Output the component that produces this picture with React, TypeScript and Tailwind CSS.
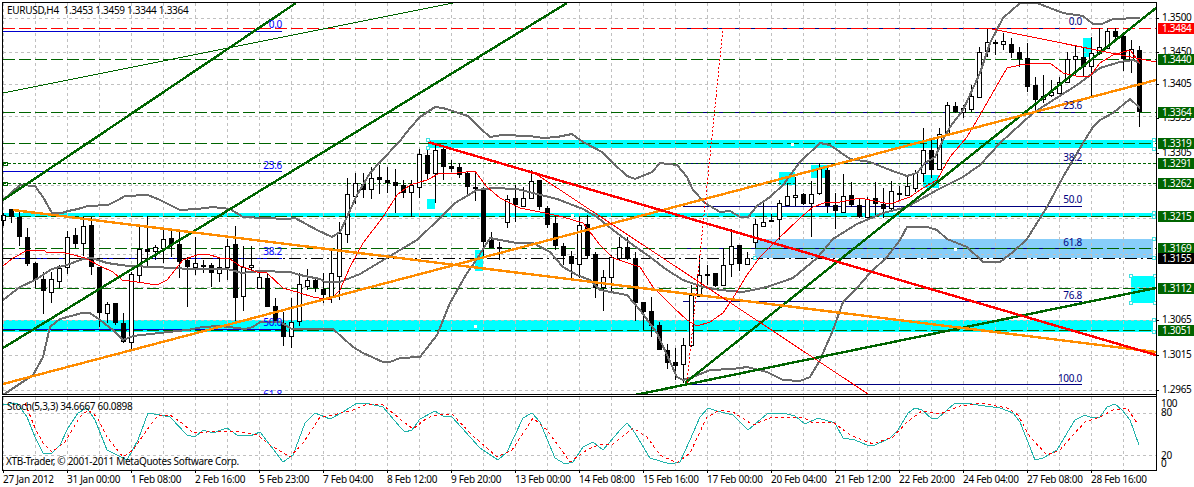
import React from "react";

/* ---- Colours ---- */

const GREEN = "#006400";
const GRAY = "#6b6b6b";
const ORANGE = "#ff8c00";
const RED = "#ff0000";
const GRID = "#c0c0c0";
const CYAN = "#00ffff";
const THICK = 2.4;

/* ---- Chart data, all in pixels of the plot ---- */

// high, body top, body bottom, low, 1 = white candle
type Candle = [number, number, number, number, number];

const CANDLES: Candle[] = [
  [213, 215, 220, 226, 1], [209, 209, 217, 223, 0], [212, 217, 237, 246, 0], [228, 237, 264, 266, 0],
  [262, 263, 280, 288, 0], [272, 279, 291, 314, 0], [272, 279, 292, 303, 1], [265, 268, 281, 288, 1],
  [231, 237, 267, 274, 1], [228, 235, 244, 248, 0], [217, 226, 243, 256, 1], [217, 225, 267, 275, 0],
  [267, 267, 313, 327, 0], [302, 304, 313, 323, 1], [303, 303, 323, 325, 0], [313, 323, 342, 343, 0],
  [272, 274, 342, 349, 1], [225, 249, 275, 283, 1], [216, 249, 252, 266, 0], [245, 247, 251, 260, 1],
  [230, 239, 248, 263, 1], [230, 238, 245, 257, 0], [232, 244, 262, 278, 0], [257, 260, 267, 307, 0],
  [237, 263, 267, 275, 1], [260, 265, 265, 273, 1], [263, 265, 273, 287, 0], [257, 267, 273, 282, 1],
  [239, 246, 267, 280, 1], [226, 244, 298, 321, 0], [246, 267, 296, 311, 1], [246, 265, 267, 273, 1],
  [270, 277, 288, 288, 1], [273, 278, 307, 307, 0], [298, 306, 323, 323, 0], [312, 323, 337, 346, 0],
  [298, 322, 336, 348, 1], [273, 284, 321, 326, 1], [269, 280, 286, 290, 1], [279, 280, 288, 292, 0],
  [273, 289, 295, 303, 0], [248, 273, 296, 303, 1], [222, 233, 276, 300, 1], [178, 194, 234, 243, 1],
  [173, 183, 196, 204, 1], [173, 184, 190, 198, 0], [167, 178, 189, 199, 1], [165, 177, 180, 194, 0],
  [167, 180, 183, 193, 0], [169, 182, 186, 213, 0], [180, 185, 193, 198, 0], [180, 185, 192, 217, 1],
  [149, 154, 187, 198, 1], [150, 155, 174, 180, 0], [143, 150, 173, 203, 1], [147, 149, 167, 180, 0],
  [160, 166, 169, 172, 0], [163, 167, 175, 178, 0], [171, 173, 187, 195, 0], [172, 187, 187, 201, 1],
  [187, 188, 242, 257, 0], [232, 240, 248, 248, 0], [242, 247, 247, 260, 1], [195, 199, 222, 228, 1],
  [185, 198, 205, 222, 0], [187, 198, 206, 206, 1], [170, 181, 198, 198, 1], [180, 180, 207, 210, 0],
  [206, 208, 225, 228, 0], [216, 223, 246, 250, 0], [243, 246, 256, 265, 0], [251, 256, 264, 278, 0],
  [217, 225, 264, 278, 1], [215, 224, 256, 259, 0], [252, 254, 288, 298, 0], [270, 277, 287, 311, 1],
  [255, 257, 277, 291, 1], [237, 247, 258, 260, 1], [237, 247, 258, 260, 0], [252, 258, 303, 321, 0],
  [302, 302, 312, 330, 0], [297, 311, 326, 337, 0], [322, 325, 350, 350, 0], [344, 350, 363, 369, 0],
  [348, 362, 366, 380, 0], [338, 345, 364, 383, 1], [285, 295, 345, 347, 1], [256, 275, 296, 296, 1],
  [265, 274, 274, 285, 1], [273, 273, 286, 287, 0], [248, 265, 285, 285, 1], [229, 246, 264, 277, 1],
  [245, 245, 264, 271, 0], [252, 258, 264, 265, 1], [219, 224, 242, 248, 1], [202, 222, 226, 227, 1],
  [214, 220, 220, 222, 1], [200, 203, 219, 240, 1], [183, 196, 205, 205, 1], [177, 195, 197, 206, 1],
  [193, 194, 204, 205, 0], [181, 194, 203, 237, 1], [163, 169, 193, 195, 1], [165, 170, 206, 213, 0],
  [193, 205, 211, 229, 0], [174, 196, 212, 213, 1], [182, 195, 205, 207, 0], [199, 205, 217, 218, 0],
  [197, 199, 217, 218, 1], [182, 198, 204, 217, 0], [188, 204, 209, 218, 0], [181, 191, 208, 210, 1],
  [186, 193, 193, 200, 1], [177, 186, 195, 195, 1], [170, 173, 188, 192, 1], [128, 150, 173, 182, 1],
  [140, 150, 170, 178, 0], [128, 134, 169, 170, 1], [102, 105, 134, 134, 1], [102, 106, 112, 113, 0],
  [105, 108, 112, 118, 1], [85, 96, 109, 112, 1], [47, 52, 97, 98, 1], [28, 42, 51, 57, 1],
  [40, 42, 42, 55, 1], [33, 41, 44, 50, 1], [38, 44, 53, 58, 0], [47, 52, 59, 67, 0],
  [43, 58, 87, 92, 0], [77, 85, 100, 112, 0], [75, 96, 99, 103, 1], [80, 92, 95, 97, 1],
  [77, 82, 93, 94, 1], [52, 59, 82, 83, 1], [45, 56, 59, 75, 1], [48, 57, 67, 76, 0],
  [37, 53, 66, 96, 1], [28, 47, 53, 55, 1], [28, 31, 48, 48, 1], [28, 31, 37, 41, 0],
  [32, 36, 59, 71, 0], [40, 49, 59, 73, 1], [46, 50, 112, 127, 0],
];

const UPPER =
  "3,200 20,185 35,186 43,197 52,213 62,213 68,211 78,209 88,206 108,205 118,200 125,196 148,195 160,200 180,210 197,209 213,207 230,209 243,217 287,219 295,218 317,230 332,237 340,232 347,217 357,195 370,173 380,162 400,141 410,128 420,117 435,107 443,108 468,116 480,128 490,137 502,135 530,136 543,138 557,137 572,134 583,142 602,152 613,163 627,176 635,179 652,172 660,163 677,165 687,177 693,190 705,203 720,212 730,211 740,217 748,217 757,206 770,197 783,185 800,162 820,143 830,145 850,159 870,162 890,170 907,176 917,173 925,163 935,157 943,140 950,127 963,110 980,73 990,43 1003,18 1020,3 1037,3 1063,13 1083,16 1093,24 1102,24 1113,19 1140,18";

const MIDDLE =
  "3,300 20,287 35,280 52,269 67,265 83,259 92,258 107,263 128,266 157,267 170,268 193,269 227,269 242,273 260,271 290,272 300,275 320,279 325,282 340,282 360,274 400,250 417,240 440,218 455,203 477,190 493,188 517,189 533,193 557,199 583,209 597,217 613,230 633,245 650,257 667,270 683,280 703,287 720,290 743,292 767,287 793,278 817,258 833,239 857,224 883,213 907,207 937,190 963,177 980,165 1000,143 1033,113 1077,85 1100,68 1120,62 1133,60 1140,63";

const LOWER =
  "3,395 33,375 43,357 50,327 60,319 82,313 90,313 100,320 113,330 123,340 133,336 160,333 187,330 203,327 220,326 245,329 253,327 260,322 280,322 292,329 333,329 353,347 363,353 383,362 390,362 400,358 420,357 437,335 450,303 467,273 475,262 490,238 500,240 517,243 533,243 550,252 563,267 577,275 590,280 600,290 627,295 640,310 657,333 677,377 683,380 693,377 710,370 733,369 747,367 767,372 783,380 800,381 810,377 820,360 833,330 843,302 857,288 870,273 887,257 900,240 907,227 927,227 937,230 947,239 967,247 983,262 1000,262 1013,252 1027,239 1047,207 1063,177 1083,143 1093,127 1100,120 1113,113 1130,99 1140,108";

const MA =
  "3,266 13,258 28,250 43,250 48,253 60,252 70,254 85,258 100,266 113,272 122,280 137,282 157,285 167,280 183,260 197,255 207,254 220,258 230,259 240,266 257,272 267,273 283,288 300,293 313,297 330,300 340,290 350,267 363,243 383,217 397,195 410,185 427,180 440,173 457,173 475,171 487,187 500,198 520,208 540,212 563,217 583,223 600,245 613,258 640,267 653,287 673,307 687,320 697,326 710,322 723,313 733,298 747,275 760,257 777,240 800,218 813,207 827,202 840,202 860,198 880,202 890,204 910,197 923,188 937,180 950,157 967,137 980,115 1000,80 1007,68 1020,65 1040,63 1050,63 1063,73 1080,77 1090,76 1100,63 1113,55 1130,50 1140,63";

const STOCH_MAIN =
  "3,405 17,403 27,417 35,437 43,453 52,453 60,445 68,428 78,413 87,408 95,420 107,450 127,460 138,440 148,413 160,415 170,417 187,435 195,437 203,430 213,433 227,428 237,435 250,436 260,432 283,462 293,455 305,423 315,413 330,419 343,412 357,403 370,404 383,407 400,427 405,432 412,430 420,419 435,411 443,416 452,417 480,448 498,460 507,452 523,418 532,413 540,422 555,458 565,464 573,462 583,447 593,442 603,450 620,430 627,423 633,430 650,458 670,464 680,462 690,440 700,417 708,408 717,411 733,415 748,430 767,414 783,413 795,416 805,424 818,418 835,423 843,438 855,440 867,445 875,445 890,438 898,430 908,413 915,408 922,410 932,419 938,418 955,403 965,403 978,405 1000,408 1013,413 1020,422 1035,460 1043,458 1057,450 1067,433 1075,420 1085,415 1092,418 1100,417 1107,407 1115,404 1122,410 1130,420 1139,445";

const STOCH_SIGNAL =
  "25,403 35,428 43,443 52,452 65,442 80,417 88,410 97,417 107,437 123,457 133,450 147,430 158,415 170,415 182,423 193,433 207,432 223,431 237,431 257,435 273,447 290,457 303,443 320,417 333,415 353,410 367,404 383,405 400,419 413,429 427,418 440,414 452,414 472,435 497,457 512,450 533,418 547,430 570,462 587,450 600,444 613,444 633,428 647,437 660,455 677,463 690,453 707,417 720,410 733,412 753,425 770,418 803,417 813,423 833,422 850,435 873,444 893,437 907,422 922,411 940,414 960,406 980,403 1007,408 1018,415 1030,437 1047,455 1060,450 1073,435 1085,422 1100,417 1113,410 1127,408 1137,423";

// x1, y1, x2, y2, colour, width
const TREND_LINES: Array<[number, number, number, number, string, number, string?]> = [
  [3, 93, 453, 3, GREEN, 1],
  [3, 200, 296, 3, GREEN, THICK],
  [3, 348, 567, 3, GREEN, THICK],
  [685, 383, 1156, 8, GREEN, THICK],
  [635, 395, 1156, 288, GREEN, THICK],
  [3, 384, 1156, 80, ORANGE, THICK],
  [13, 210, 1156, 352, ORANGE, THICK],
  [428, 142, 1156, 355, RED, THICK],
  [987, 28, 1156, 62, RED, 1],
  [533, 172, 868, 394, RED, 1],
  [687, 383, 723, 28, RED, 1, "2 2"],
];

// y, colour, dash
const LEVELS: Array<[number, string, string]> = [
  [28, RED, "12 4"],
  [59, GREEN, "12 4"],
  [112, GREEN, "12 4"],
  [143, GREEN, "12 4"],
  [163, GREEN, "3 2"],
  [183, GREEN, "3 2"],
  [216, GREEN, "12 4"],
  [248, GREEN, "12 4"],
  [258, "#000000", "12 4 2 4"],
  [288, GREEN, "12 4"],
  [330, GREEN, "12 4"],
];

const PRICE_TAGS: Array<[number, string, string]> = [
  [28, "1.3484", RED],
  [59, "1.3440", GREEN],
  [112, "1.3364", GREEN],
  [143, "1.3319", GREEN],
  [163, "1.3291", GREEN],
  [183, "1.3262", GREEN],
  [216, "1.3215", GREEN],
  [248, "1.3169", GREEN],
  [258, "1.3155", "#000000"],
  [288, "1.3112", GREEN],
  [330, "1.3051", GREEN],
];

const PRICE_TICKS: Array<[number, string]> = [
  [18, "1.3500"], [52, "1.3450"], [84, "1.3405"], [118, "1.3355"], [153, "1.3305"],
  [320, "1.3065"], [355, "1.3015"], [390, "1.2965"],
];

const GRID_Y = [18, 52, 84, 116, 153, 185, 218, 254, 287, 320, 355, 390];

// x, y, width, height
const ZONES: Array<[number, number, number, number]> = [
  [428, 140, 725, 8],
  [3, 213, 1150, 4],
  [3, 320, 1150, 12],
  [427, 199, 8, 10],
  [475, 250, 8, 21],
  [779, 172, 16, 13],
  [811, 165, 16, 13],
  [923, 175, 16, 13],
  [1083, 38, 8, 19],
  [1131, 276, 24, 27],
];

const HANDLES: Array<[number, number]> = [
  [428, 140], [428, 148], [1131, 276], [1155, 276], [1131, 303], [1155, 303], [755, 258],
  [1154, 140], [1154, 149], [1154, 213], [1154, 217], [1154, 239], [1154, 258], [1154, 320], [1154, 332],
];

const SQUARES: Array<[number, number]> = [
  [572, 215], [792, 144], [475, 326], [955, 249],
];

const LEFT_FIB: Array<[number, string, number]> = [
  [31, "0.0", 28],
  [171, "23.6", 169],
  [258, "38.2", 255],
  [329, "50.0", 326],
  [397, "61.8", 398],
];

const RIGHT_FIB: Array<[number, string, number]> = [
  [28, "0.0", 25],
  [112, "23.6", 109],
  [163, "38.2", 161],
  [206, "50.0", 203],
  [248, "61.8", 246],
  [301, "76.8", 299],
  [384, "100.0", 382],
];

const TIME_LABELS = [
  "27 Jan 2012", "31 Jan 00:00", "1 Feb 08:00", "2 Feb 16:00", "5 Feb 23:00", "7 Feb 04:00",
  "8 Feb 12:00", "9 Feb 20:00", "13 Feb 00:00", "14 Feb 08:00", "15 Feb 16:00", "17 Feb 00:00",
  "20 Feb 04:00", "21 Feb 12:00", "22 Feb 20:00", "24 Feb 04:00", "27 Feb 08:00", "28 Feb 16:00",
];

const GRID_X = Array.from({ length: 36 }, (_, i) => 3 + 32 * i);

/* ---- Pieces ---- */

function CandleBar({ candle, x }: { candle: Candle; x: number }) {
  const [high, top, bottom, low, bull] = candle;
  return (
    <g>
      <rect x={x} y={high} width={1} height={low - high} fill="#000000" />
      {bull ? (
        <rect x={x - 1.5} y={top + 0.5} width={4} height={Math.max(bottom - top, 1)} fill="#ffffff" stroke="#000000" />
      ) : (
        <rect x={x - 2} y={top} width={5} height={Math.max(bottom - top, 1)} fill="#000000" />
      )}
    </g>
  );
}

function VerticalGrid({ y1, y2 }: { y1: number; y2: number }) {
  return (
    <>
      {GRID_X.map((x) => (
        <line key={x} x1={x + 0.5} y1={y1} x2={x + 0.5} y2={y2} stroke={GRID} strokeDasharray="3 3" />
      ))}
    </>
  );
}

function MainChart() {
  return (
    <svg width={1194} height={397} className="block shrink-0 text-[10px] tracking-[-0.3px]" shapeRendering="crispEdges">
      {ZONES.map(([x, y, w, h]) => (
        <rect key={`${x}-${y}`} x={x} y={y} width={w} height={h} fill={CYAN} />
      ))}
      <rect x={755} y={239} width={398} height={19} fill="#87cefa" />

      <VerticalGrid y1={3} y2={394} />
      {GRID_Y.map((y) => (
        <line key={y} x1={3} y1={y + 0.5} x2={1156} y2={y + 0.5} stroke={GRID} strokeDasharray="3 3" />
      ))}

      {/* fibonacci levels */}
      {LEFT_FIB.slice(0, 4).map(([y]) => (
        <line key={y} x1={3} y1={y + 0.5} x2={282} y2={y + 0.5} stroke="#0000cd" />
      ))}
      {RIGHT_FIB.map(([y]) => (
        <line key={y} x1={683} y1={y + 0.5} x2={1082} y2={y + 0.5} stroke="#000080" />
      ))}

      {LEVELS.map(([y, color, dash]) => (
        <line key={y} x1={3} y1={y + 0.5} x2={1156} y2={y + 0.5} stroke={color} strokeDasharray={dash} />
      ))}

      {CANDLES.map((c, i) => (
        <CandleBar key={i} candle={c} x={3 + 8 * i} />
      ))}

      <polyline points={UPPER} fill="none" stroke={GRAY} strokeWidth={2} />
      <polyline points={MIDDLE} fill="none" stroke={GRAY} strokeWidth={2} />
      <polyline points={LOWER} fill="none" stroke={GRAY} strokeWidth={2} />
      <polyline points={MA} fill="none" stroke={RED} strokeWidth={1} />

      {TREND_LINES.map(([x1, y1, x2, y2, color, width, dash]) => (
        <line
          key={`${x1}-${y1}`}
          x1={x1}
          y1={y1}
          x2={x2}
          y2={y2}
          stroke={color}
          strokeWidth={width}
          strokeDasharray={dash}
        />
      ))}

      {HANDLES.map(([x, y]) => (
        <rect key={`${x}-${y}`} x={x - 1.5} y={y - 1.5} width={3} height={3} fill="#ffffff" stroke="#40e0e0" />
      ))}
      {SQUARES.map(([x, y]) => (
        <rect key={`${x}-${y}`} x={x - 1} y={y - 1} width={3} height={3} fill="#ffffff" />
      ))}
      <rect x={3} y={162} width={4} height={3} fill="none" stroke={GREEN} />
      <rect x={3} y={182} width={4} height={3} fill="none" stroke={GREEN} />

      {/* fibonacci captions */}
      {LEFT_FIB.map(([y, label, baseline]) => (
        <text key={y} x={282} y={baseline} textAnchor="end" fill="#0000ff">
          {label}
        </text>
      ))}
      {RIGHT_FIB.map(([y, label, baseline]) => (
        <text key={y} x={1082} y={baseline} textAnchor="end" fill="#000080">
          {label}
        </text>
      ))}

      <text x={7} y={14} fill="#000000">
        EURUSD,H4&#160;&#160;1.3453 1.3459 1.3344 1.3364
      </text>

      {/* frame and price axis */}
      <rect x={0} y={0} width={1194} height={2} fill="#ffffff" />
      <rect x={2} y={2} width={1155} height={1} fill="#000000" />
      <rect x={2} y={2} width={1} height={393} fill="#000000" />
      <rect x={3} y={395} width={1153} height={1} fill="#ffffff" />
      <rect x={1156} y={2} width={1} height={395} fill="#000000" />
      <rect x={1157} y={3} width={37} height={394} fill="#ffffff" />
      <rect x={2} y={394} width={1155} height={1} fill="#000000" />
      <rect x={2} y={396} width={1155} height={1} fill="#000000" />

      {PRICE_TICKS.map(([y, label]) => (
        <g key={y}>
          <rect x={1157} y={y} width={2} height={1} fill="#000000" />
          <text x={1162} y={y + 3} fill="#000000">
            {label}
          </text>
        </g>
      ))}
      {PRICE_TAGS.map(([y, label, color]) => (
        <g key={y}>
          <rect x={1158} y={y - 5} width={36} height={11} fill={color} />
          <text x={1162} y={y + 4} fill="#ffffff">
            {label}
          </text>
        </g>
      ))}
    </svg>
  );
}

function StochChart() {
  // the polyline data is in page coordinates, so the panel is shifted up by 397
  return (
    <svg width={1194} height={74} viewBox="0 397 1194 74" className="block shrink-0 text-[10px] tracking-[-0.3px]" shapeRendering="crispEdges">
      <VerticalGrid y1={397} y2={470} />
      <line x1={3} y1={413.5} x2={1156} y2={413.5} stroke={GRID} strokeDasharray="3 3" />
      <line x1={3} y1={455.5} x2={1156} y2={455.5} stroke={GRID} strokeDasharray="3 3" />

      <polyline points={STOCH_MAIN} fill="none" stroke="#20b2aa" />
      <polyline points={STOCH_SIGNAL} fill="none" stroke={RED} strokeDasharray="3 3" />

      <text x={7} y={410} fill="#000000">
        Stoch(5,3,3) 34.6667 60.0898
      </text>
      <text x={6} y={465} fill="#000000">
        XTB-Trader, © 2001-2011 MetaQuotes Software Corp.
      </text>

      <rect x={2} y={397} width={1} height={74} fill="#000000" />
      <rect x={1156} y={397} width={1} height={74} fill="#000000" />
      <rect x={2} y={470} width={1155} height={1} fill="#000000" />

      <text x={1161} y={407} fill="#000000">100</text>
      <text x={1161} y={416} fill="#000000">80</text>
      <text x={1161} y={459} fill="#000000">20</text>
      <text x={1161} y={467} fill="#000000">0</text>
    </svg>
  );
}

function TimeAxis() {
  return (
    <div className="flex pl-[3px] text-[10px] leading-[14px] tracking-[-0.3px] text-black">
      {TIME_LABELS.map((label) => (
        <div key={label} className="relative w-[64px] shrink-0 whitespace-nowrap pt-px">
          <span className="absolute left-0 top-0 h-[2px] w-px bg-black" />
          <span className="block">{label}</span>
        </div>
      ))}
    </div>
  );
}

export default function App() {
  return (
    <div className="flex h-[487px] w-[1194px] flex-col overflow-hidden bg-white font-['Noto_Sans',sans-serif]">
      <MainChart />
      <StochChart />
      <TimeAxis />
    </div>
  );
}
